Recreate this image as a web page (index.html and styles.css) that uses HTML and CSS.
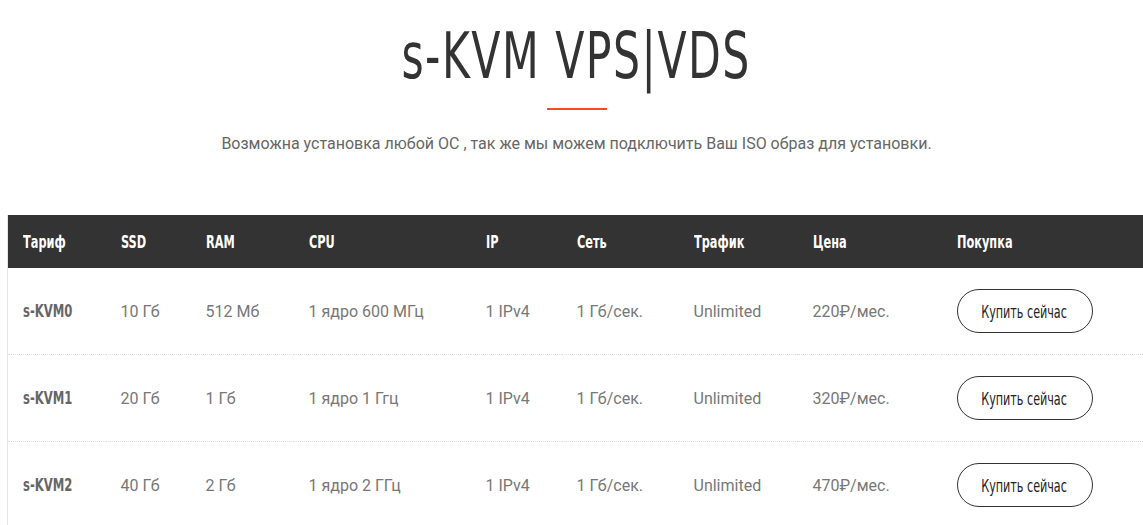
FILE: index.html
```html
<!DOCTYPE html>
<html lang="ru">
<head>
<meta charset="utf-8">
<title>s-KVM VPS|VDS</title>
<link rel="stylesheet" href="styles.css">
</head>
<body>
<div class="page">
  <header class="intro">
    <h1 class="title"><span class="title-text">s-KVM VPS|VDS</span></h1>
    <div class="accent"></div>
    <p class="lead">Возможна установка любой ОС , так же мы можем подключить Ваш ISO образ для установки.</p>
  </header>
  <table class="plans">
    <colgroup>
      <col class="c1"><col class="c2"><col class="c3"><col class="c4"><col class="c5"><col class="c6"><col class="c7"><col class="c8"><col class="c9">
    </colgroup>
    <thead>
      <tr><th><span class="cond">Тариф</span></th><th><span class="cond">SSD</span></th><th><span class="cond">RAM</span></th><th><span class="cond">CPU</span></th><th><span class="cond">IP</span></th><th><span class="cond">Сеть</span></th><th><span class="cond">Трафик</span></th><th><span class="cond">Цена</span></th><th><span class="cond">Покупка</span></th></tr>
    </thead>
    <tbody>
      <tr><td class="name"><span class="cond">s-KVM0</span></td><td>10 Гб</td><td>512 Мб</td><td>1 ядро 600 МГц</td><td>1 IPv4</td><td>1 Гб/сек.</td><td>Unlimited</td><td>220₽/мес.</td><td><a class="buy" href="#"><span class="buy-text">Купить сейчас</span></a></td></tr>
      <tr><td class="name"><span class="cond">s-KVM1</span></td><td>20 Гб</td><td>1 Гб</td><td>1 ядро 1 Ггц</td><td>1 IPv4</td><td>1 Гб/сек.</td><td>Unlimited</td><td>320₽/мес.</td><td><a class="buy" href="#"><span class="buy-text">Купить сейчас</span></a></td></tr>
      <tr><td class="name"><span class="cond">s-KVM2</span></td><td>40 Гб</td><td>2 Гб</td><td>1 ядро 2 ГГц</td><td>1 IPv4</td><td>1 Гб/сек.</td><td>Unlimited</td><td>470₽/мес.</td><td><a class="buy" href="#"><span class="buy-text">Купить сейчас</span></a></td></tr>
    </tbody>
  </table>
</div>
</body>
</html>
```
FILE: styles.css
```css
html, body { margin: 0; padding: 0; background: #fff; overflow: hidden; }
body { font-family: Roboto, "Liberation Sans", sans-serif; }
.page { padding-left: 7px; width: 1139px; }
.intro { display: flex; flex-direction: column; align-items: center; padding-top: 21px; }
.title {
  margin: 0;
  font-family: "DejaVu Sans Condensed", "DejaVu Sans", sans-serif;
  font-weight: 400;
  font-size: 64px;
  line-height: 70px;
  color: #333;
  letter-spacing: 2px;
}
.title-text { display: inline-block; transform: scaleX(0.74); transform-origin: center; }
.accent { width: 60px; height: 2px; background: #ff4a1c; margin-top: 17px; }
.lead { margin: 22px 0 0; font-size: 16px; line-height: 24px; color: #666; }
.plans {
  margin-top: 59px;
  width: 1139px;
  border-collapse: collapse;
  table-layout: fixed;
  border-left: 1px solid #e5e5e5;
}
.c1 { width: 98px; } .c2 { width: 85px; } .c3 { width: 103px; } .c4 { width: 177px; }
.c5 { width: 91px; } .c6 { width: 117px; } .c7 { width: 119px; } .c8 { width: 144px; } .c9 { width: 205px; }
.cond { display: inline-block; transform: scaleX(0.7); transform-origin: left center; white-space: nowrap; }
.plans th {
  background: #333;
  color: #fff;
  text-align: left;
  font-family: "DejaVu Sans Condensed", "DejaVu Sans", sans-serif;
  font-weight: 700;
  font-size: 18px;
  height: 53px;
  padding: 0 0 0 15px;
}
.plans td {
  height: 86px;
  padding: 0 0 0 15px;
  font-size: 16px;
  color: #777;
  border-bottom: 1px dotted #ddd;
}
.plans td.name {
  font-family: "DejaVu Sans Condensed", "DejaVu Sans", sans-serif;
  font-weight: 700;
  font-size: 17px;
  color: #666;
}
.plans td.name .cond { transform: scaleX(0.76); }
.buy {
  display: inline-flex;
  align-items: center;
  justify-content: center;
  width: 136px;
  height: 44px;
  box-sizing: border-box;
  border: 1px solid #333;
  border-radius: 22px;
  color: #222;
  text-decoration: none;
  font-family: "DejaVu Sans Condensed", "DejaVu Sans", sans-serif;
  font-size: 18px;
}
.buy-text { display: inline-block; transform: scaleX(0.69); white-space: nowrap; }
```
